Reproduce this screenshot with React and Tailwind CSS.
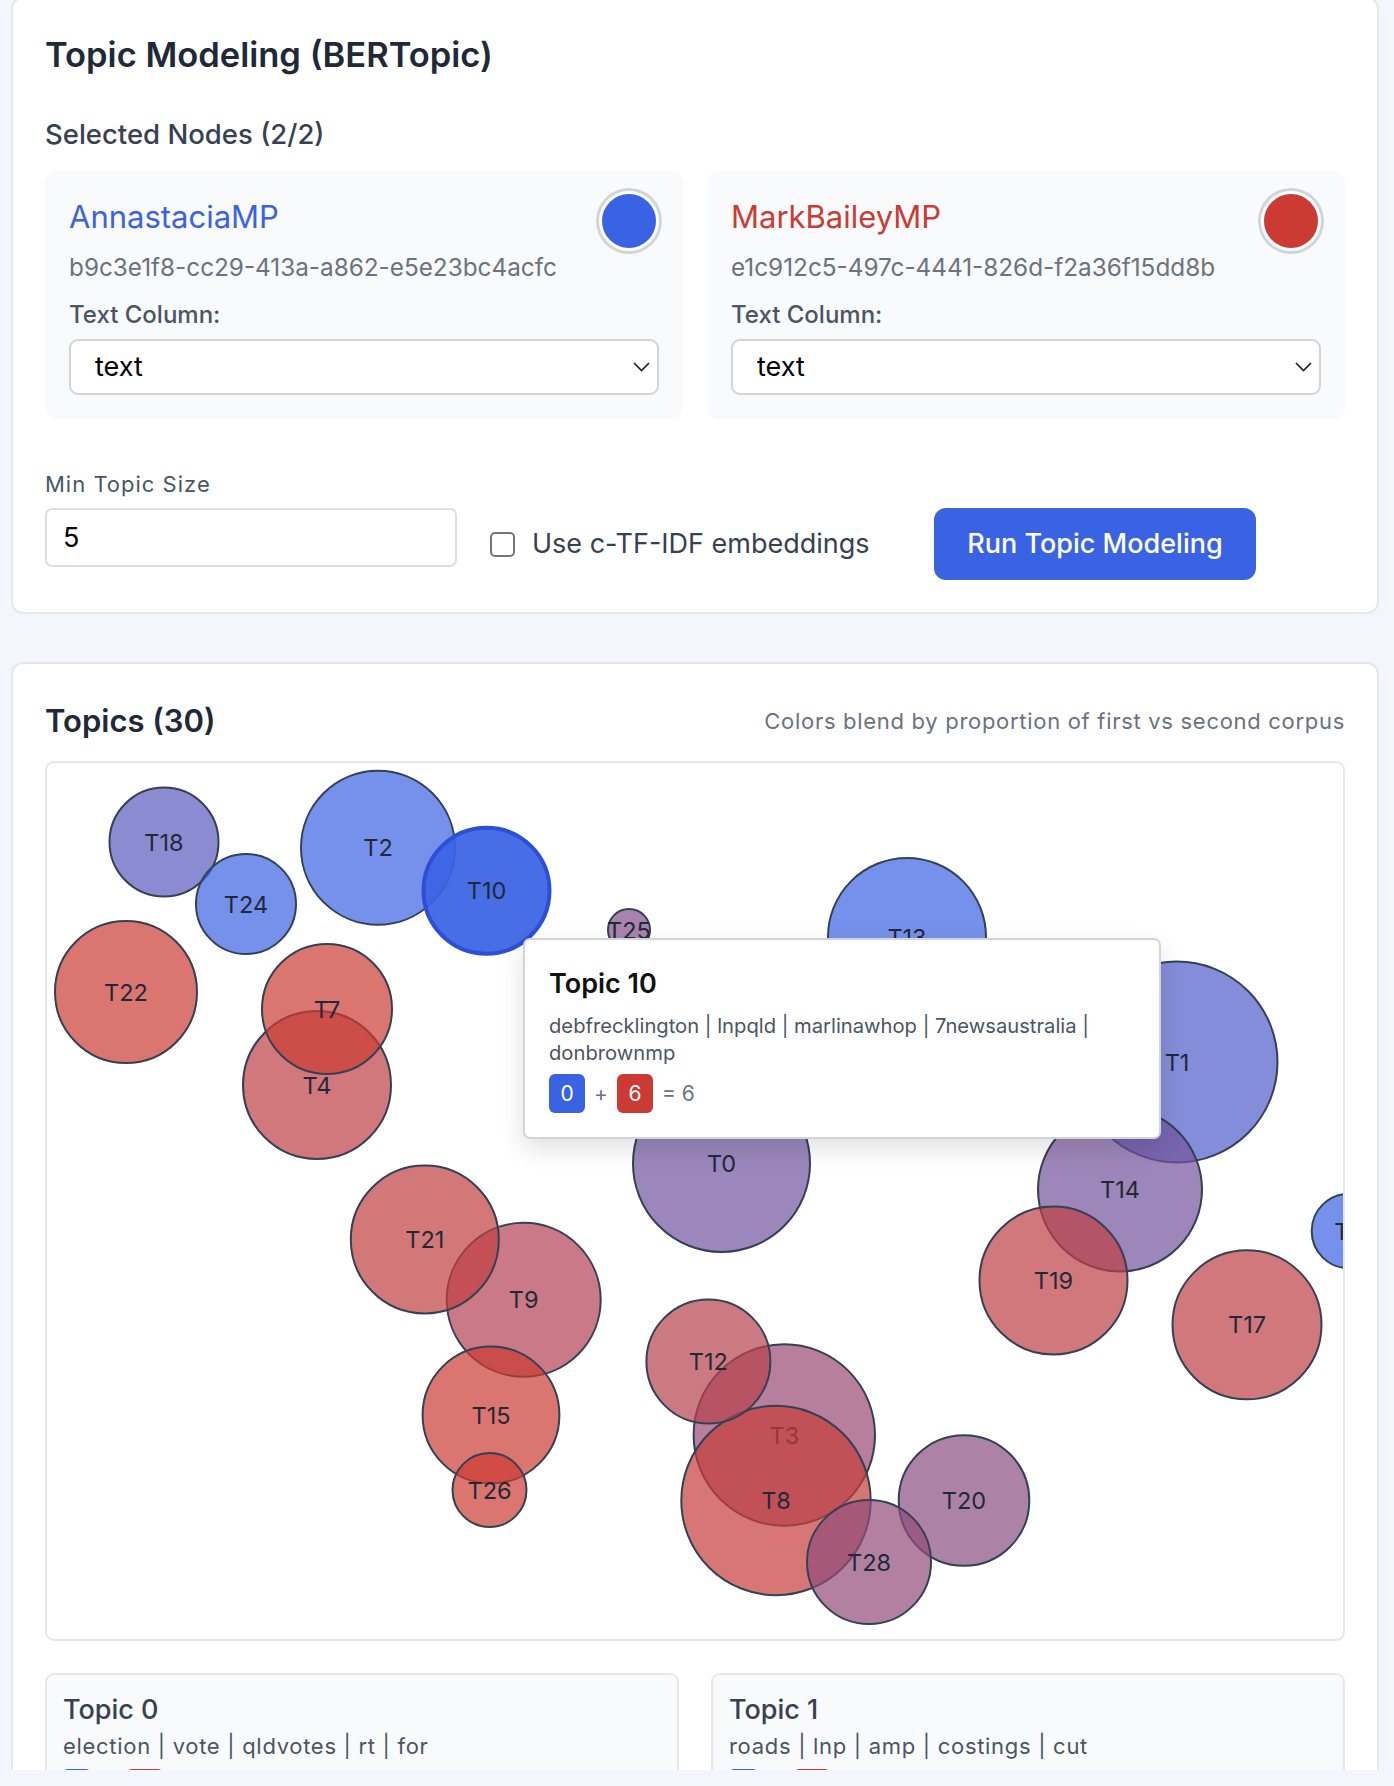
import React from 'react';

const BLUE = [58, 99, 228];
const RED = [204, 59, 50];

// p = share of the first corpus (blue)
const blend = (p) => {
  const c = RED.map((v, i) => Math.round(v + (BLUE[i] - v) * p));
  return `rgb(${c[0]}, ${c[1]}, ${c[2]})`;
};

// positions in page pixels, shifted into the chart below
const topics = [
  { id: 0, x: 721.5, y: 1162.5, r: 88.5, p: 0.62 },
  { id: 1, x: 1177, y: 1061, r: 100.5, p: 0.85 },
  { id: 2, x: 378, y: 846.7, r: 77, p: 1 },
  { id: 3, x: 784.3, y: 1434, r: 90.7, p: 0.35 },
  { id: 4, x: 317, y: 1084, r: 74, p: 0.1 },
  { id: 5, x: 1349, y: 1230, r: 37.3, p: 1 },
  { id: 7, x: 327, y: 1008, r: 65, p: 0 },
  { id: 8, x: 776, y: 1499.5, r: 94.7, p: 0.05 },
  { id: 9, x: 523.7, y: 1298.8, r: 77, p: 0.18 },
  { id: 10, x: 486.5, y: 889.7, r: 63, p: 1, active: true },
  { id: 12, x: 708.4, y: 1360.5, r: 62, p: 0.15 },
  { id: 13, x: 907, y: 936, r: 79, p: 1 },
  { id: 14, x: 1120, y: 1188.5, r: 82, p: 0.6 },
  { id: 15, x: 491, y: 1414, r: 68.4, p: 0 },
  { id: 17, x: 1247, y: 1323.8, r: 74.5, p: 0.1 },
  { id: 18, x: 164, y: 841, r: 54.5, p: 0.78 },
  { id: 19, x: 1053.5, y: 1279.5, r: 74, p: 0.1 },
  { id: 20, x: 964, y: 1499.5, r: 65.3, p: 0.45 },
  { id: 21, x: 424.8, y: 1238.5, r: 74, p: 0.08 },
  { id: 22, x: 126, y: 991, r: 71, p: 0 },
  { id: 24, x: 246, y: 903, r: 50, p: 1 },
  { id: 25, x: 629, y: 929, r: 21, p: 0.5 },
  { id: 26, x: 489.5, y: 1489, r: 37, p: 0 },
  { id: 28, x: 869, y: 1561, r: 62, p: 0.4 },
];

const nodes = [
  { name: 'AnnastaciaMP', id: 'b9c3e1f8-cc29-413a-a862-e5e23bc4acfc', text: 'text-[#3a63e3]', dot: 'bg-[#3a63e3]' },
  { name: 'MarkBaileyMP', id: 'e1c912c5-497c-4441-826d-f2a36f15dd8b', text: 'text-[#cc3b33]', dot: 'bg-[#cc3b33]' },
];

const topicCards = [
  { title: 'Topic 0', words: 'election | vote | qldvotes | rt | for', a: 7, b: 17 },
  { title: 'Topic 1', words: 'roads | lnp | amp | costings | cut', a: 6, b: 12 },
];

function NodeCard({ node }) {
  return (
    <div className="bg-[#f9fafb] rounded-[12px] p-[24px]">
      <div className="flex items-start justify-between">
        <div>
          <div className={`text-[31px] leading-[44px] ${node.text}`}>{node.name}</div>
          <div className="mt-[10px] text-[24.3px] leading-[36px] text-[#6b7280]">{node.id}</div>
        </div>
        <div className={`-mt-[4px] w-[60px] h-[60px] rounded-full border-[3px] border-white ring-[3px] ring-[#d1d5db] ${node.dot}`} />
      </div>
      <div className="mt-[12px] text-[24px] font-medium leading-[36px] text-[#4b5563]">Text Column:</div>
      <div className="relative mt-[6px] h-[56px]">
        <select className="w-full h-full appearance-none bg-white border-2 border-[#d1d5db] rounded-[9px] pl-[24px] text-[27px] text-black outline-none">
          <option>text</option>
        </select>
        <svg className="absolute right-[9px] top-[23px]" width="17" height="10" viewBox="0 0 17 10">
          <path d="M1 1 L8.5 8.5 L16 1" fill="none" stroke="#222" strokeWidth="1.7" />
        </svg>
      </div>
    </div>
  );
}

function BubbleChart() {
  return (
    <div className="relative mt-[19px] h-[880px] bg-white border-2 border-[#e5e7eb] rounded-[9px] overflow-hidden">
      <svg width="1297" height="876" className="block">
        {topics.map((t) => (
          <g key={t.id}>
            <circle
              cx={t.x - 47}
              cy={t.y - 762}
              r={t.r}
              fill={blend(t.p)}
              fillOpacity={t.active ? 0.93 : 0.7}
              stroke={t.active ? '#2c4fd6' : '#334155'}
              strokeWidth={t.active ? 4 : 2}
            />
            <text
              x={t.x - 47}
              y={t.y - 762}
              textAnchor="middle"
              dominantBaseline="central"
              fontSize="23.5"
              fontFamily="Inter, sans-serif"
              fill="#1f2937"
            >
              T{t.id}
            </text>
          </g>
        ))}
      </svg>

      {/* hover tooltip */}
      <div className="absolute left-[476px] top-[175px] w-[638px] bg-white border-2 border-[#d1d5db] rounded-[7px] p-[24px] shadow-[0_10px_24px_rgba(0,0,0,0.12)]">
        <div className="text-[27px] font-semibold leading-[40px] text-[#111]">Topic 10</div>
        <div className="mt-[8px] text-[20.2px] leading-[27px] text-[#4b5563]">
          debfrecklington | lnpqld | marlinawhop | 7newsaustralia | donbrownmp
        </div>
        <div className="mt-[8px] flex items-center gap-[9px] text-[21px]">
          <span className="h-[39px] min-w-[36px] px-[11px] rounded-[6px] bg-[#3a63e3] text-white flex items-center justify-center">0</span>
          <span className="text-[#6b7280]">+</span>
          <span className="h-[39px] min-w-[36px] px-[11px] rounded-[6px] bg-[#cc3b33] text-white flex items-center justify-center">6</span>
          <span className="text-[#6b7280]">= 6</span>
        </div>
      </div>
    </div>
  );
}

export default function App() {
  return (
    <div className="w-[1394px] h-[1786px] bg-[#f3f6fc] overflow-hidden [font-family:Inter,sans-serif]">
      <div className="h-[1770px] overflow-hidden pl-[11px] pr-[15px]">
        {/* Settings card */}
        <div className="-mt-[3px] bg-white border-2 border-[#e5e7eb] rounded-[12px] px-[32px] pt-[32px] pb-[32px]">
          <h1 className="text-[34.5px] font-semibold leading-[48px] text-[#1f2937]">Topic Modeling (BERTopic)</h1>
          <div className="mt-[35px] text-[27.5px] font-medium leading-[40px] text-[#374151]">Selected Nodes (2/2)</div>
          <div className="mt-[17px] grid grid-cols-2 gap-[24px]">
            {nodes.map((n) => (
              <NodeCard key={n.id} node={n} />
            ))}
          </div>

          <div className="mt-[50px] text-[22px] tracking-[1px] leading-[30px] text-[#4b5563]">Min Topic Size</div>
          <div className="mt-[9px] flex items-start">
            <input
              defaultValue="5"
              className="w-[412px] h-[59px] border-2 border-[#dcdfe4] rounded-[7px] pl-[16px] text-[27px] text-black bg-white outline-none"
            />
            <label className="ml-[33px] w-[444px] h-[72px] flex items-center">
              <input type="checkbox" className="appearance-none w-[25px] h-[25px] border-2 border-[#767676] rounded-[5px] bg-white" />
              <span className="ml-[17px] text-[27px] text-[#374151]">Use c-TF-IDF embeddings</span>
            </label>
            <button className="w-[322px] h-[72px] rounded-[12px] bg-[#3a63e3] text-white text-[27px] font-medium">
              Run Topic Modeling
            </button>
          </div>
        </div>

        {/* Topics card */}
        <div className="mt-[48px] bg-white border-2 border-[#e5e7eb] rounded-[12px] px-[32px] pt-[36px] pb-[32px]">
          <div className="flex items-center justify-between">
            <h2 className="text-[31px] font-semibold leading-[42px] text-[#1f2937]">Topics (30)</h2>
            <div className="text-[22px] tracking-[0.7px] leading-[30px] text-[#6b7280]">Colors blend by proportion of first vs second corpus</div>
          </div>

          <BubbleChart />

          <div className="mt-[32px] grid grid-cols-2 gap-[32px]">
            {topicCards.map((c) => (
              <div key={c.title} className="bg-[#f9fafb] border-2 border-[#e5e7eb] rounded-[9px] px-[16px] pt-[17px] pb-[18px]">
                <div className="text-[27px] font-medium leading-[35px] text-[#374151]">{c.title}</div>
                <div className="mt-[4px] text-[22px] tracking-[0.7px] leading-[30px] text-[#4b5563]">{c.words}</div>
                <div className="mt-[8px] flex items-center gap-[12px] text-[18px]">
                  <span className="h-[34px] px-[9px] rounded-[5px] bg-[#3a63e3] text-white flex items-center">{c.a}</span>
                  <span className="text-[#6b7280]">+</span>
                  <span className="h-[34px] px-[9px] rounded-[5px] bg-[#cc3b33] text-white flex items-center">{c.b}</span>
                  <span className="text-[#6b7280]">= {c.a + c.b}</span>
                </div>
              </div>
            ))}
          </div>
        </div>
      </div>
    </div>
  );
}
